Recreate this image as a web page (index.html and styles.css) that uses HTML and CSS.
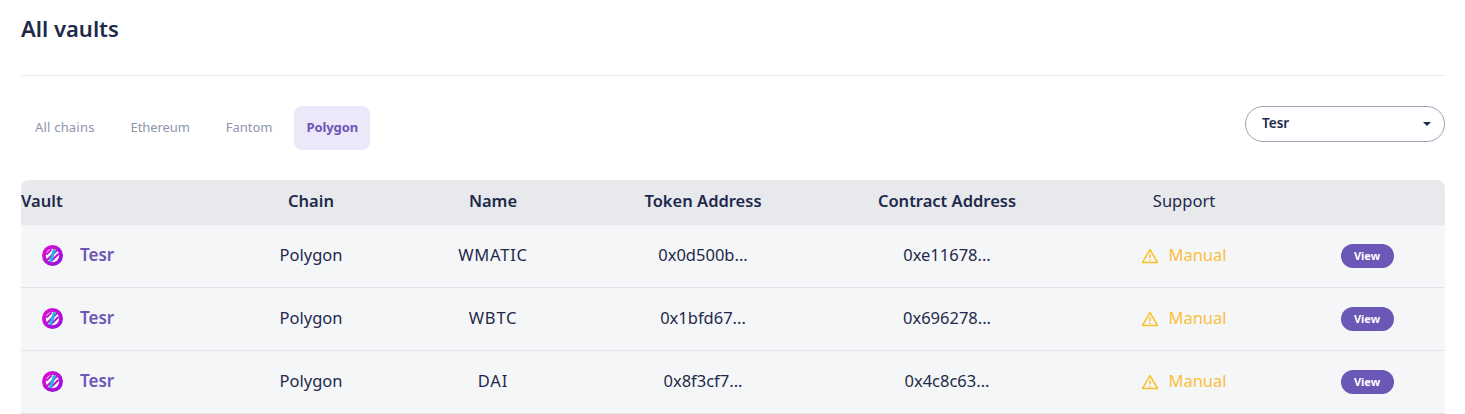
FILE: index.html
```html
<!DOCTYPE html>
<html lang="en">
<head>
<meta charset="utf-8">
<title>All vaults</title>
<link rel="stylesheet" href="styles.css">
</head>
<body>
<main class="page">
  <h1 class="title">All vaults</h1>
  <div class="toolbar">
    <nav class="tabs">
      <a class="tab tab-all">All chains</a>
      <a class="tab tab-eth">Ethereum</a>
      <a class="tab">Fantom</a>
      <a class="tab active">Polygon</a>
    </nav>
    <div class="select"><span>Tesr</span><i class="caret"></i></div>
  </div>
  <section class="table">
    <div class="row head">
      <div class="first">Vault</div><div>Chain</div><div>Name</div><div>Token Address</div><div>Contract Address</div><div class="plain">Support</div><div></div>
    </div>
    <div class="row">
      <div class="first vault"><svg class="logo" viewBox="0 0 24 24"><use href="#tesr"/></svg><span>Tesr</span></div>
      <div>Polygon</div><div class="wide">WMATIC</div><div>0x0d500b...</div><div>0xe11678...</div>
      <div class="manual"><svg class="warn" viewBox="0 0 24 24"><use href="#warn"/></svg>Manual</div>
      <div class="action"><a class="view">View</a></div>
    </div>
    <div class="row">
      <div class="first vault"><svg class="logo" viewBox="0 0 24 24"><use href="#tesr"/></svg><span>Tesr</span></div>
      <div>Polygon</div><div class="wide">WBTC</div><div>0x1bfd67...</div><div>0x696278...</div>
      <div class="manual"><svg class="warn" viewBox="0 0 24 24"><use href="#warn"/></svg>Manual</div>
      <div class="action"><a class="view">View</a></div>
    </div>
    <div class="row">
      <div class="first vault"><svg class="logo" viewBox="0 0 24 24"><use href="#tesr"/></svg><span>Tesr</span></div>
      <div>Polygon</div><div class="wide">DAI</div><div>0x8f3cf7...</div><div>0x4c8c63...</div>
      <div class="manual"><svg class="warn" viewBox="0 0 24 24"><use href="#warn"/></svg>Manual</div>
      <div class="action"><a class="view">View</a></div>
    </div>
  </section>
</main>
<svg class="defs" width="0" height="0">
  <defs>
    <linearGradient id="tesr-ring" x1="0" y1="0" x2="1" y2="1">
      <stop offset="0" stop-color="#e80fd0"/>
      <stop offset="1" stop-color="#8a10dc"/>
    </linearGradient>
  </defs>
  <symbol id="tesr" viewBox="0 0 24 24">
    <circle cx="12" cy="12" r="12" fill="url(#tesr-ring)"/>
    <circle cx="12" cy="12" r="7.6" fill="#fff"/>
    <path d="M5 11 11 5M6 17 17 6M10 19 19 10" stroke="#c010d8" stroke-width="2.4" fill="none"/>
    <path d="M14.5 5 9.5 19" stroke="#1fb6e0" stroke-width="3.4" fill="none"/>
  </symbol>
  <symbol id="warn" viewBox="0 0 24 24">
    <path d="M12 3.5 2 20.5h20Z" fill="none" stroke="#fbbf24" stroke-width="2" stroke-linejoin="round"/>
    <path d="M12 9.5v5.5M12 17v1.6" stroke="#fbbf24" stroke-width="2" fill="none"/>
  </symbol>
</svg>
</body>
</html>
```
FILE: styles.css
```css
* { box-sizing: border-box; }
html, body { margin: 0; height: 414px; overflow: hidden; background: #fff; }
body { font-family: "Noto Sans", "Open Sans", sans-serif; color: #1e2a4a; }
.page { padding: 0 20px 0 21px; }
.title {
  margin: 0;
  height: 76px;
  padding-top: 13px;
  font-size: 22px;
  line-height: 30px;
  font-weight: 600;
  color: #1e2a4a;
  border-bottom: 1px solid #e8eaed;
}
.toolbar { display: flex; justify-content: space-between; align-items: flex-start; margin-top: 30px; height: 44px; }
.tabs { display: flex; }
.tab {
  height: 44px;
  line-height: 43px;
  padding: 0 12px;
  margin-right: 12px;
  font-size: 13px;
  color: #8e96ab;
  border-radius: 8px;
}
.tab-all { margin-left: 2px; letter-spacing: 0.2px; }
.tab-eth { letter-spacing: -0.1px; }
.tab.active { background: #ece7f9; color: #6b57b5; font-weight: 700; letter-spacing: -0.1px; margin-left: -3px; padding-left: 13px; }
.select {
  width: 200px;
  height: 36px;
  border: 1px solid #9ba3b5;
  border-radius: 18px;
  padding: 0 16px;
  display: flex;
  align-items: center;
  justify-content: space-between;
  font-size: 13.5px;
  font-weight: 600;
}
.select span { margin-top: -2px; }
.caret { width: 0; height: 0; border: 4px solid transparent; border-top: 4px solid #1e2a4a; border-bottom: 0; margin-right: -3px; }
.table { margin-top: 30px; }
.row {
  display: grid;
  grid-template-columns: 204px 172px 192px 228px 260px 214px 154px;
  align-items: center;
  height: 63px;
  padding-bottom: 4px;
  background: #f5f6f8;
  border-bottom: 1px solid #e2e4e8;
  text-align: center;
  font-size: 16.5px;
}
.row.head {
  height: 45px;
  background: #e8e9ed;
  border-bottom: 0;
  border-radius: 8px 8px 0 0;
  font-weight: 600;
}
.first { text-align: left; }
.plain { font-weight: 400; }
.wide { letter-spacing: 0.8px; }
.vault { display: flex; align-items: center; padding-left: 21px; gap: 17px; color: #6b57b5; font-weight: 600; }
.vault span { font-size: 17px; }
.logo { width: 21px; height: 21px; display: block; margin-top: 2px; }
.manual { display: flex; justify-content: center; align-items: center; gap: 9px; color: #fbbf3c; }
.warn { width: 18px; height: 18px; margin-top: 4px; }
.action { display: flex; justify-content: center; }
.view {
  display: block;
  width: 53px;
  height: 24px;
  line-height: 24px;
  margin: 4px 2px 0 0;
  border-radius: 12px;
  background: #6b57b5;
  color: #fff;
  font-size: 11px;
  font-weight: 700;
}
.defs { position: absolute; }
```
